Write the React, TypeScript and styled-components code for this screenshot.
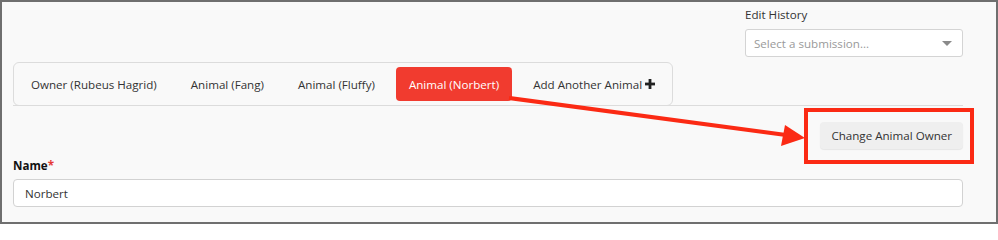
import styled, { createGlobalStyle } from "styled-components";

const GlobalStyle = createGlobalStyle`
  body {
    margin: 0;
    background: #ffffff;
    font-family: "Open Sans", "Liberation Sans", sans-serif;
  }
`;

const tabs = [
  "Owner (Rubeus Hagrid)",
  "Animal (Fang)",
  "Animal (Fluffy)",
  "Animal (Norbert)",
];

const Frame = styled.div`
  position: relative;
  box-sizing: border-box;
  width: 998px;
  height: 224px;
  border: 2px solid #6f6f6f;
  background: #f9f9f9;
  padding: 0 33px 0 11px;
  color: #333;
  font-size: 11.6px;
`;

const HistoryBlock = styled.div`
  width: 218px;
  margin-left: auto;
  padding-top: 4px;
`;

const Label = styled.div<{ bold?: boolean }>`
  font-size: 11.6px;
  line-height: 18px;
  color: ${(p) => (p.bold ? "#111" : "#333")};
  font-weight: ${(p) => (p.bold ? 700 : 400)};
`;

const Required = styled.span`
  color: #e53935;
`;

const Select = styled.div`
  box-sizing: border-box;
  margin-top: 5px;
  height: 28px;
  border: 1px solid #d4d4d4;
  border-radius: 3px;
  background: #fff;
  display: flex;
  align-items: center;
  justify-content: space-between;
  padding: 0 10px 0 8px;
  color: #9a9a9a;
`;

const Caret = styled.span`
  width: 0;
  height: 0;
  border-left: 5px solid transparent;
  border-right: 5px solid transparent;
  border-top: 5px solid #8a8a8a;
`;

const TabRow = styled.div`
  margin-top: 5px;
  display: flex;
  border-bottom: 1px solid #dcdcdc;
`;

const TabBar = styled.div`
  display: flex;
  gap: 8px;
  padding: 4px;
  border: 1px solid #dcdcdc;
  border-radius: 6px;
  margin-bottom: -1px;
`;

const Tab = styled.div<{ active?: boolean }>`
  height: 34px;
  padding: 0 13px;
  display: flex;
  align-items: center;
  gap: 3px;
  border-radius: 4px;
  white-space: nowrap;
  background: ${(p) => (p.active ? "#f13b2f" : "transparent")};
  color: ${(p) => (p.active ? "#fff" : "#333")};
`;

const ButtonRow = styled.div`
  margin-top: 16px;
  display: flex;
  justify-content: flex-end;
`;

const Highlight = styled.div`
  position: relative;

  &::after {
    content: "";
    position: absolute;
    top: -14px;
    bottom: -15px;
    left: -16px;
    right: -11px;
    border: 4px solid #fb2a14;
    pointer-events: none;
  }
`;

const Button = styled.button`
  height: 27px;
  padding: 0 11px;
  border: none;
  border-radius: 4px;
  background: #efefef;
  box-shadow: 0 1px 1px rgba(0, 0, 0, 0.08);
  font-family: inherit;
  font-size: 11.6px;
  color: #333;
`;

const Field = styled.div`
  margin-top: 8px;
`;

const Input = styled.div`
  box-sizing: border-box;
  margin-top: 4px;
  height: 28px;
  border: 1px solid #d2d2d2;
  border-radius: 4px;
  background: #fff;
  padding: 0 11px;
  display: flex;
  align-items: center;
  color: #333;
`;

const Overlay = styled.svg`
  position: absolute;
  top: -2px;
  left: -2px;
  pointer-events: none;
`;

const PlusIcon = () => (
  <svg width="10" height="10" viewBox="0 0 10 10">
    <rect x="3.6" y="0" width="2.8" height="10" fill="#222" />
    <rect x="0" y="3.6" width="10" height="2.8" fill="#222" />
  </svg>
);

export default function App() {
  return (
    <>
      <GlobalStyle />
      <Frame>
        <HistoryBlock>
          <Label>Edit History</Label>
          <Select>
            <span>Select a submission...</span>
            <Caret />
          </Select>
        </HistoryBlock>
        <TabRow>
          <TabBar>
            {tabs.map((t) => (
              <Tab key={t} active={t === "Animal (Norbert)"}>
                {t}
              </Tab>
            ))}
            <Tab>
              Add Another Animal <PlusIcon />
            </Tab>
          </TabBar>
        </TabRow>
        <ButtonRow>
          <Highlight>
            <Button>Change Animal Owner</Button>
          </Highlight>
        </ButtonRow>
        <Field>
          <Label bold>
            Name<Required>*</Required>
          </Label>
          <Input>Norbert</Input>
        </Field>
        <Overlay width="998" height="224" viewBox="0 0 998 224">
          <line
            x1="509"
            y1="98"
            x2="786"
            y2="135"
            stroke="#fb2a14"
            strokeWidth="4"
          />
          <polygon points="805,138 781,146 785,125" fill="#fb2a14" />
        </Overlay>
      </Frame>
    </>
  );
}
